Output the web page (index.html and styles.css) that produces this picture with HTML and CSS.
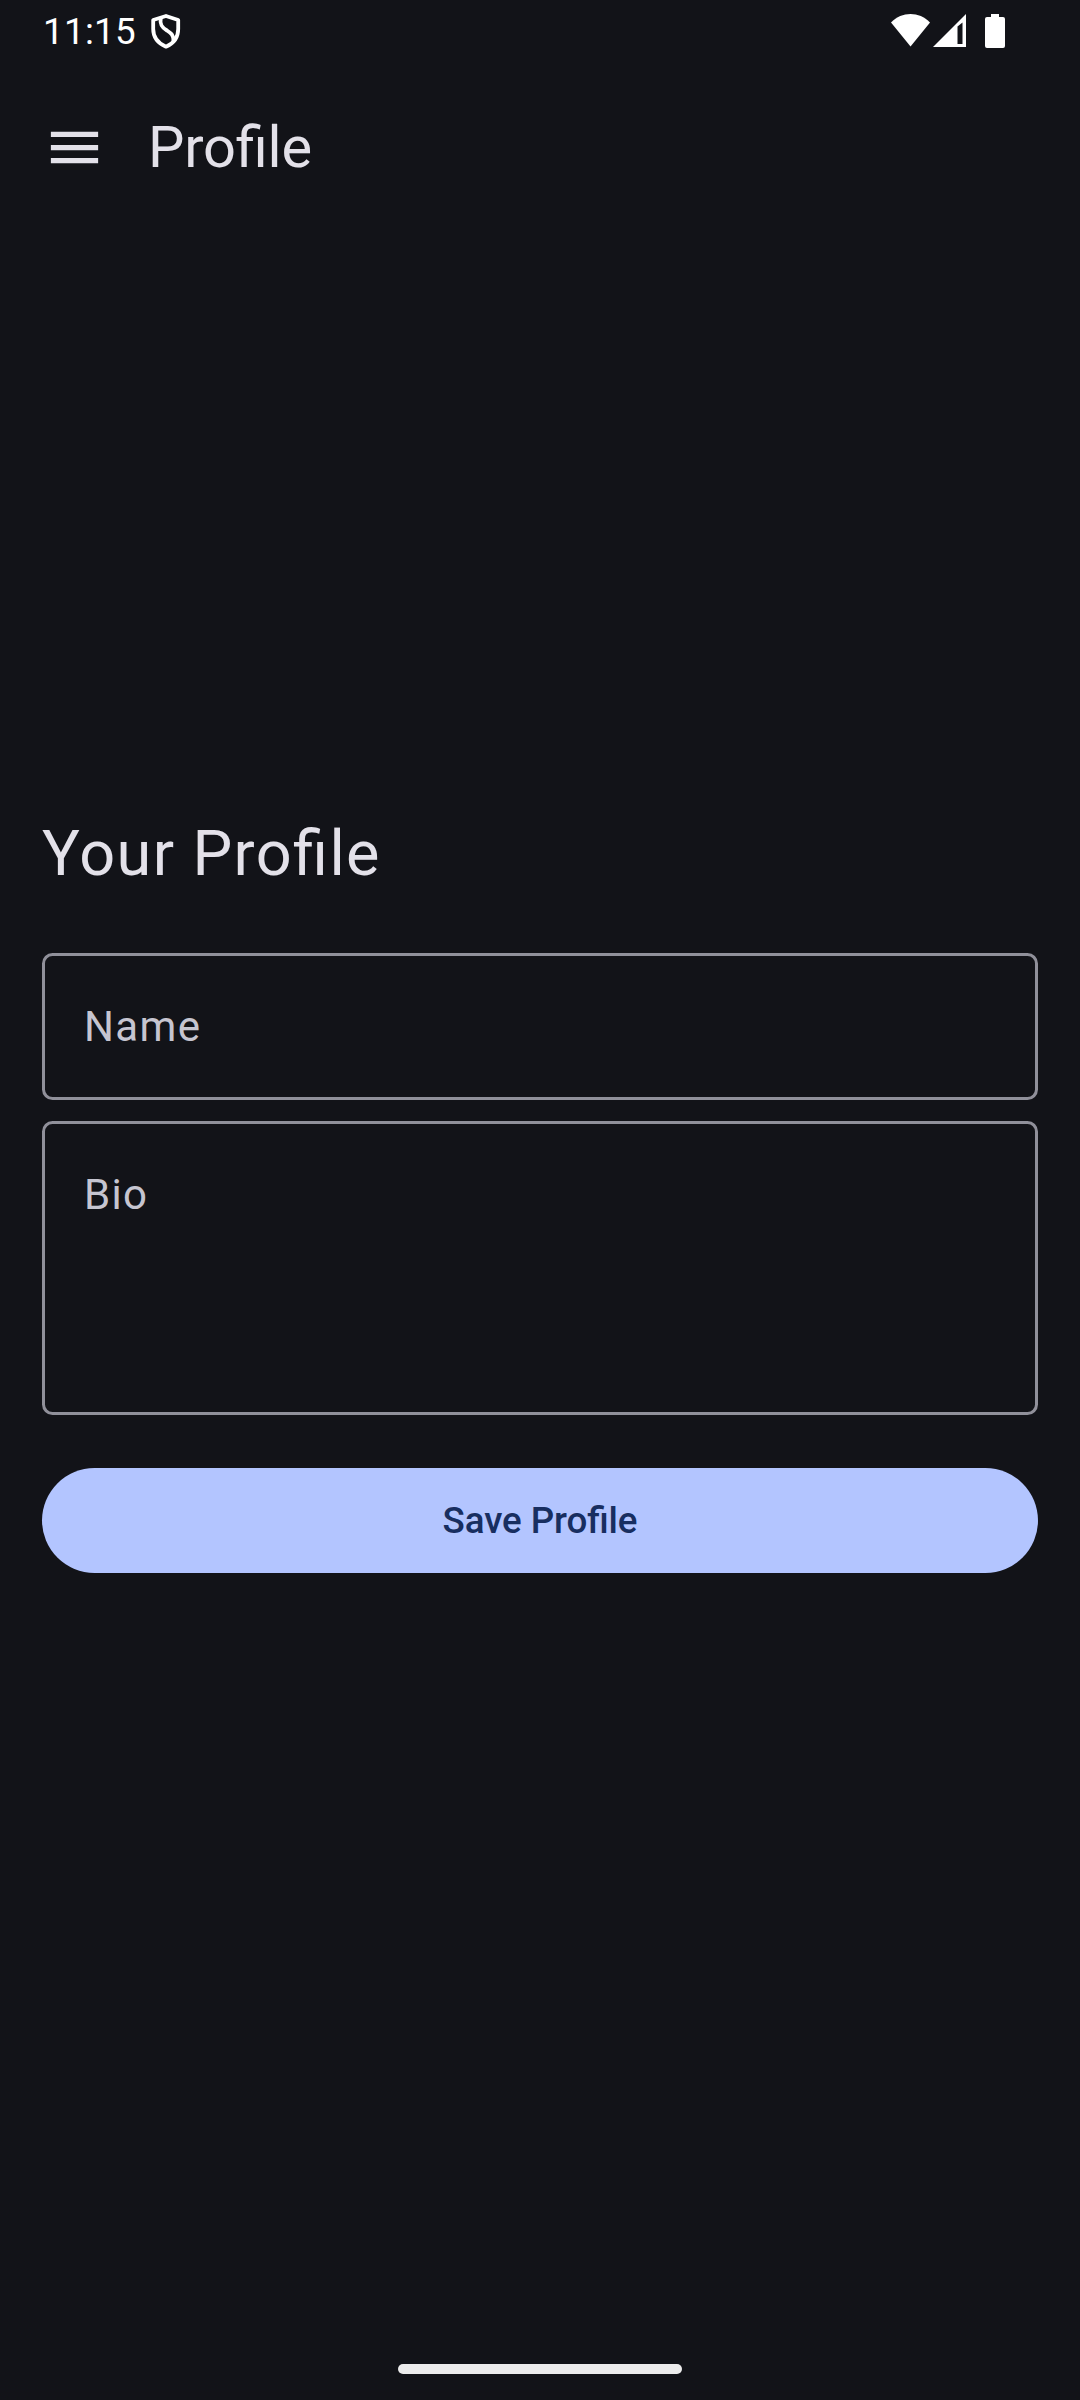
FILE: index.html
```html
<!DOCTYPE html>
<html lang="en">
<head>
<meta charset="utf-8">
<title>Profile</title>
<link rel="stylesheet" href="styles.css">
</head>
<body>
<div class="screen">
  <div class="status-bar">
    <span class="clock">11:15</span>
    <svg class="shield" viewBox="0 0 32 38"><path d="M16 4 28.200 8V17C28.200 25.500 23.500 31.500 16 34.700C8.500 31.500 3.200 25.500 3.200 17V8Z"/><path d="M10.800 6C9.500 12.500 12 15.500 17 18.500C21.500 21.500 23.500 23 23.500 29"/></svg>
    <div class="signals">
      <svg class="wifi" viewBox="0 0 40 34"><path d="M1 9.500C12-1.800 29-1.800 40 9.500L20.500 33.500Z"/></svg>
      <svg class="cell" viewBox="0 0 33 33"><path fill-rule="evenodd" d="M0 33 33 0V33ZM24.500 12.500V30H29.500V8.500Z"/></svg>
      <svg class="battery" viewBox="0 0 20 34"><path d="M6 0H14V3H18Q20 3 20 5V32Q20 34 18 34H2Q0 34 0 32V5Q0 3 2 3H6Z"/></svg>
    </div>
  </div>
  <header class="app-bar">
    <svg class="menu" viewBox="0 0 24 24"><path d="M3 18h18v-2H3v2zm0-5h18v-2H3v2zm0-7v2h18V6H3z"/></svg>
    <h1 class="title">Profile</h1>
  </header>
  <main class="content">
    <h2 class="heading">Your Profile</h2>
    <div class="field">Name</div>
    <div class="field field-tall">Bio</div>
    <button class="save">Save Profile</button>
  </main>
  <div class="nav-bar"><div class="handle"></div></div>
</div>
</body>
</html>
```
FILE: styles.css
```css
* { box-sizing: border-box; }
body { margin: 0; background: #121318; font-family: Roboto, sans-serif; }
.screen { width: 1080px; height: 2400px; display: flex; flex-direction: column; color: #e3e1e9; background: #121318; }
.status-bar { height: 63px; padding: 0 75px 0 43px; display: flex; align-items: flex-start; color: #fff; }
.clock { font-size: 36.75px; line-height: 43px; padding-top: 10px; letter-spacing: .3px; }
.shield { width: 32px; height: 38px; margin: 12px 0 0 14px; fill: none; stroke: #fff; stroke-width: 3.8; stroke-linejoin: round; }
.signals { margin-left: auto; display: flex; fill: #fff; }
.wifi { width: 40px; height: 34px; margin-top: 13px; }
.cell { width: 33px; height: 33px; margin: 14px 0 0 3px; }
.battery { width: 20px; height: 34px; margin: 14px 0 0 19px; }
.app-bar { height: 168px; padding: 0 43px; display: flex; align-items: center; gap: 42px; }
.menu { width: 63px; height: 63px; fill: #e3e1e9; }
.title { margin: 0; font-size: 57.75px; font-weight: 400; line-height: 74px; letter-spacing: -.2px; font-feature-settings: "liga" 1; }
.content { flex: 1; padding: 581px 42px 0; display: flex; flex-direction: column; }
.heading { margin: 0 0 57px; font-size: 63px; font-weight: 400; line-height: 84px; letter-spacing: 1.4px; font-feature-settings: "liga" 1; }
.field { height: 147px; flex: none; padding: 39px; border: 3px solid #90909a; border-radius: 10.5px; font-size: 42px; line-height: 63px; letter-spacing: 1.35px; color: #c6c5d0; }
.field-tall { height: 294px; margin-top: 21px; }
.save { margin-top: 53px; height: 105px; flex: none; padding: 0; border: 0; border-radius: 53px; background: #b3c5ff; color: #182e60; font: 500 36.75px/52px Roboto, sans-serif; letter-spacing: -.1px; font-feature-settings: "liga" 1; }
.nav-bar { height: 63px; display: flex; justify-content: center; padding-top: 27px; }
.handle { width: 284px; height: 10px; border-radius: 5px; background: #ececec; }
```
